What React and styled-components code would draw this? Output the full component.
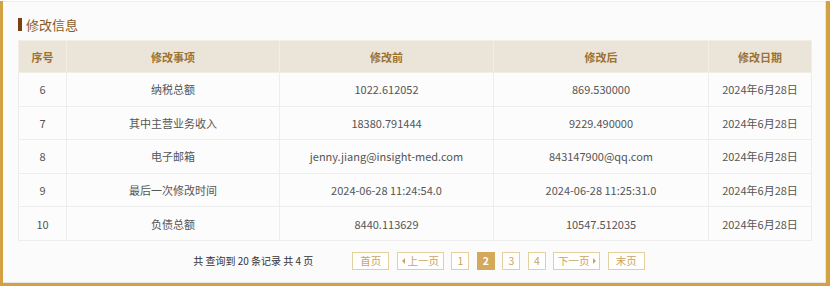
import React from "react";
import styled, { createGlobalStyle } from "styled-components";

const GlobalStyle = createGlobalStyle`
  body {
    margin: 0;
    background: #ffffff;
    font-family: "Noto Sans CJK SC", "Noto Sans", sans-serif;
  }
`;

const columns = [
  { title: "序号", width: 48 },
  { title: "修改事项", width: 213 },
  { title: "修改前", width: 214 },
  { title: "修改后", width: 215 },
  { title: "修改日期", width: 103 },
];

const rows = [
  ["6", "纳税总额", "1022.612052", "869.530000", "2024年6月28日"],
  ["7", "其中主营业务收入", "18380.791444", "9229.490000", "2024年6月28日"],
  ["8", "电子邮箱", "jenny.jiang@insight-med.com", "843147900@qq.com", "2024年6月28日"],
  ["9", "最后一次修改时间", "2024-06-28 11:24:54.0", "2024-06-28 11:25:31.0", "2024年6月28日"],
  ["10", "负债总额", "8440.113629", "10547.512035", "2024年6月28日"],
];

export default function App() {
  return (
    <>
      <GlobalStyle />
      <Frame>
        <Panel>
          <Title>修改信息</Title>
          <Table>
            <colgroup>
              {columns.map((c) => (
                <col key={c.title} style={{ width: c.width }} />
              ))}
            </colgroup>
            <thead>
              <tr>
                {columns.map((c) => (
                  <Th key={c.title}>{c.title}</Th>
                ))}
              </tr>
            </thead>
            <tbody>
              {rows.map((r) => (
                <tr key={r[0]}>
                  {r.map((cell, i) => (
                    <Td key={i}>{cell}</Td>
                  ))}
                </tr>
              ))}
            </tbody>
          </Table>
          <Pager>
            <Summary>共 查询到 20 条记录 共 4 页</Summary>
            <Buttons>
              <PageButton $w={37}>首页</PageButton>
              <PageButton $w={47}>
                <Arrow $dir="left" />
                上一页
              </PageButton>
              <PageButton $w={18}>1</PageButton>
              <PageButton $w={18} $active>
                2
              </PageButton>
              <PageButton $w={18}>3</PageButton>
              <PageButton $w={18}>4</PageButton>
              <PageButton $w={47}>
                下一页
                <Arrow $dir="right" />
              </PageButton>
              <PageButton $w={37}>末页</PageButton>
            </Buttons>
          </Pager>
        </Panel>
      </Frame>
    </>
  );
}

const Frame = styled.div`
  width: 830px;
  height: 286px;
  box-sizing: border-box;
  border-left: 3px solid #d3a143;
  border-right: 4px solid #d3a143;
  border-bottom: 4px solid #d3a143;
  background: #fafafa;
`;

const Panel = styled.div`
  height: 100%;
  box-sizing: border-box;
  margin-top: 1px;
  border-top: 1px solid #ececec;
  border-right: 1px solid #e6e6e6;
  border-bottom: 1px solid #e6e6e6;
  background: #fbfbfb;
  padding: 12px 13px 0 15px;
  display: flex;
  flex-direction: column;
`;

const Title = styled.div`
  display: flex;
  align-items: center;
  gap: 4px;
  height: 20px;
  margin-bottom: 6px;
  font-size: 13px;
  color: #8a5a26;
  &::before {
    content: "";
    width: 4px;
    height: 13px;
    background: #7d3f0f;
  }
`;

const Table = styled.table`
  width: 793px;
  border-collapse: collapse;
  table-layout: fixed;
  background: #fcfcfc;
  font-size: 11px;
`;

const Th = styled.th`
  height: 31px;
  padding: 0;
  background: #ebe4d9;
  color: #9b7232;
  font-weight: 700;
  font-size: 11px;
  text-align: center;
  border: 1px solid #f2ede5;
`;

const Td = styled.td`
  height: 32.6px;
  padding: 0;
  color: #555555;
  text-align: center;
  border: 1px solid #ededed;
  white-space: nowrap;
`;

const Pager = styled.div`
  display: flex;
  align-items: center;
  justify-content: center;
  gap: 39px;
  margin-top: 11px;
  padding-left: 8px;
`;

const Summary = styled.span`
  font-size: 10px;
  color: #333333;
`;

const Buttons = styled.div`
  display: flex;
  gap: 7.5px;
`;

const PageButton = styled.span`
  display: inline-flex;
  align-items: center;
  justify-content: center;
  gap: 3px;
  width: ${(p) => p.$w}px;
  height: 18px;
  box-sizing: border-box;
  border: 1px solid ${(p) => (p.$active ? "#d4a95b" : "#e5cf9e")};
  background: ${(p) => (p.$active ? "#d4a95b" : "#ffffff")};
  color: ${(p) => (p.$active ? "#ffffff" : "#c9a45e")};
  font-size: 10.5px;
  font-weight: ${(p) => (p.$active ? 700 : 400)};
`;

const Arrow = styled.span`
  width: 0;
  height: 0;
  border-top: 3px solid transparent;
  border-bottom: 3px solid transparent;
  ${(p) =>
    p.$dir === "left"
      ? "border-right: 3px solid #c9a45e;"
      : "border-left: 3px solid #c9a45e;"}
`;
